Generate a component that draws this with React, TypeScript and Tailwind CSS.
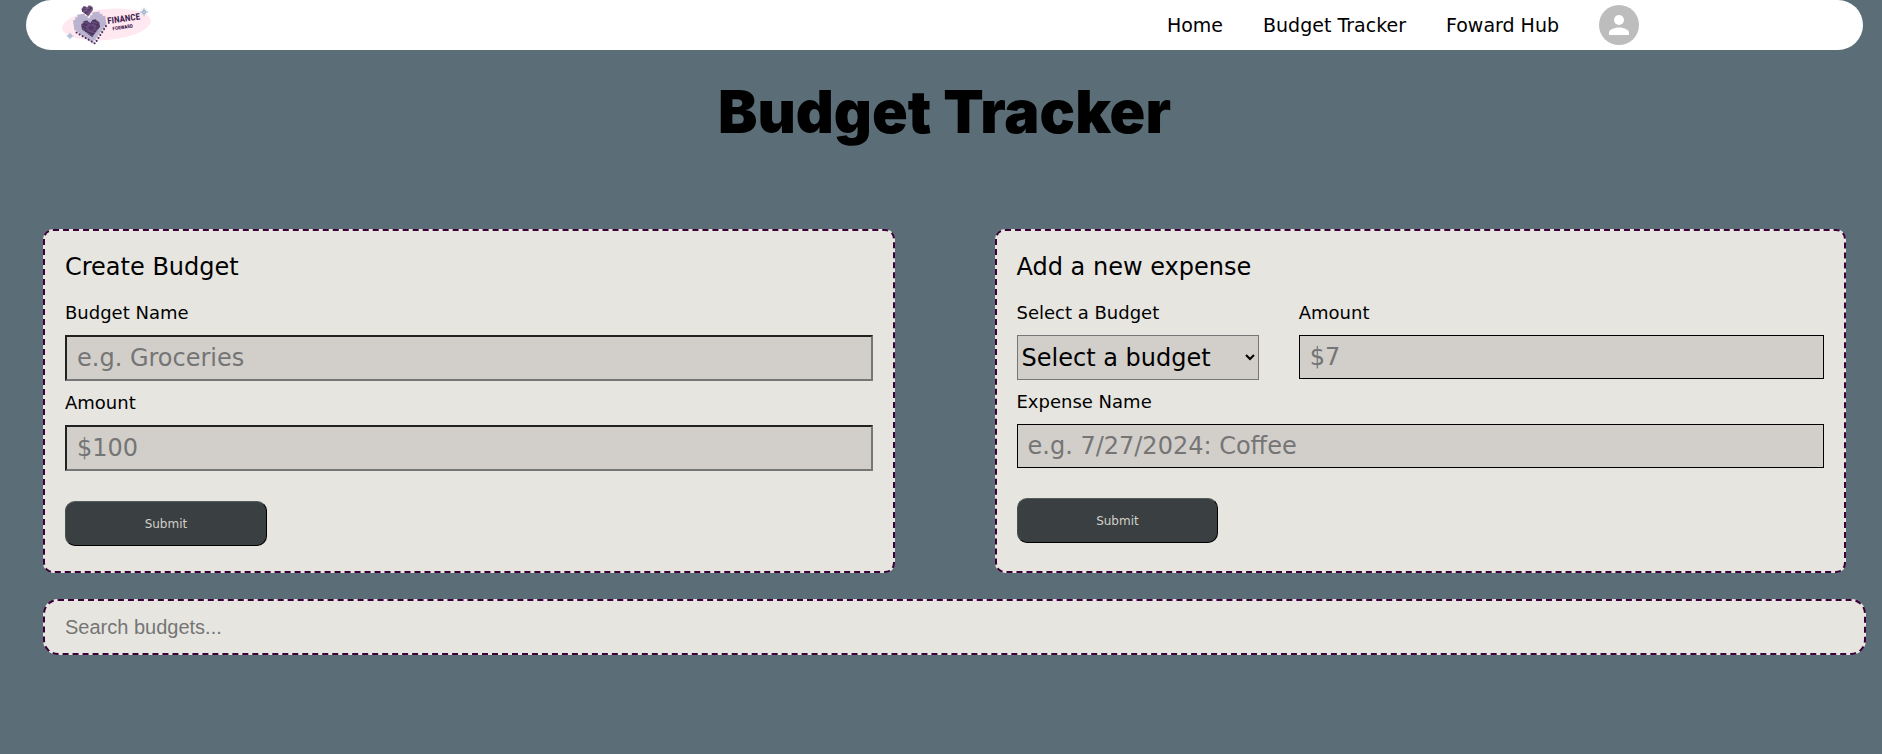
import React from 'react';

const heart = [
  '..###...###..',
  '.#####.#####.',
  '#############',
  '#############',
  '#############',
  '#############',
  '.###########.',
  '..#########..',
  '...#######...',
  '....#####....',
  '.....###.....',
  '......#......',
];

function PixelHeart({ x, y, unit, color, angle }: { x: number; y: number; unit: number; color: string; angle: number }) {
  return (
    <g transform={`translate(${x} ${y}) rotate(${angle}) scale(${unit}) translate(-6.5 -6)`} fill={color}>
      {heart.map((row, r) => {
        const first = row.indexOf('#');
        const last = row.lastIndexOf('#');
        const gap = row.slice(first, last).indexOf('.');
        if (gap < 0) return <rect key={r} x={first} y={r} width={last - first + 1} height="1.15" />;
        return (
          <React.Fragment key={r}>
            <rect x={first} y={r} width={gap} height="1.15" />
            <rect x={13 - first - gap} y={r} width={gap} height="1.15" />
          </React.Fragment>
        );
      })}
    </g>
  );
}

function Sparkle({ x, y, r }: { x: number; y: number; r: number }) {
  return (
    <g transform={`translate(${x} ${y}) scale(${r})`}>
      <path d="M0-1 .22-.22 1 0 .22 .22 0 1-.22 .22-1 0-.22-.22Z" fill="#9fb3cd" />
      <path d="M-.5-.5 .5 .5M.5-.5-.5 .5" stroke="#b9c8dc" strokeWidth=".18" />
    </g>
  );
}

function Logo() {
  return (
    <svg width="92" height="50" viewBox="0 0 92 50" role="img" aria-label="Finance Forward">
      <ellipse cx="44.500" cy="24.500" rx="44.500" ry="15.500" transform="rotate(-5 44.500 24.500)" fill="#ffe8f0" />
      <PixelHeart x={28.5} y={28} unit={2.5} color="#b9b3cf" angle={-8} />
      <PixelHeart x={29} y={28.5} unit={1.4} color="#503662" angle={-8} />
      <PixelHeart x={29.3} y={28.5} unit={0.75} color="#6a5080" angle={-8} />
      <PixelHeart x={29.3} y={28.5} unit={0.4} color="#503662" angle={-8} />
      <path d="M14.500 32.500 33 43.500 45 24.500" fill="none" stroke="#4b2e5e" strokeWidth="2" strokeLinecap="round" strokeDasharray=".1 3.400" />
      <PixelHeart x={25.5} y={11} unit={0.85} color="#4b2e5e" angle={-8} />
      <Sparkle x={8} y={36} r={4} />
      <Sparkle x={82} y={12} r={5} />
      <g transform="rotate(-8 46 25)" fill="#3f2450" fontFamily="'Liberation Sans Narrow', 'Roboto Condensed', 'Liberation Sans', sans-serif" fontWeight="bold">
        <text x="46" y="24" fontSize="9">FINANCE</text>
        <text x="50" y="31" fontSize="5">FORWARD</text>
      </g>
    </svg>
  );
}

function Avatar() {
  return (
    <svg width="40" height="40" viewBox="0 0 40 40" aria-hidden="true">
      <circle cx="20" cy="20" r="20" fill="#bdbdbd" />
      <circle cx="20" cy="15" r="5" fill="#fff" />
      <path d="M10 30v-2.500c0-3.300 6.700-5 10-5s10 1.700 10 5V30Z" fill="#fff" />
    </svg>
  );
}

const label = 'block text-[18px] leading-6';
const card = 'min-w-0 flex-1 rounded-[10px] border-2 border-dashed border-[#3b0038] bg-[#e6e5e0] px-5 pt-5 pb-[25px]';
const field = 'block w-full rounded-none bg-[#d2cfca] px-2.5 text-[24px] text-black placeholder:text-[#757575]';
const inset = 'h-[46px] border-2 border-t-[#212121] border-l-[#212121] border-r-[#767676] border-b-[#767676]';
const thin = 'h-11 border border-black';
const submit =
  'mt-[30px] block h-[45px] w-1/4 rounded-[10px] border border-t-[#565b5c] border-l-[#4a4f51] border-r-black border-b-black bg-[#3a3f41] text-[12px] text-[#d2cfca]';

export default function App() {
  return (
    <div className="min-h-screen bg-[#5b6e78] font-['DejaVu_Sans',sans-serif] text-black">
      <nav className="mr-[19px] ml-[26px] flex h-[50px] items-center justify-between rounded-full bg-white pr-[224px] pl-9">
        <a href="#home" aria-label="Finance Forward">
          <Logo />
        </a>
        <div className="flex items-center gap-10 text-[19px]">
          <a href="#home">Home</a>
          <a href="#budget">Budget Tracker</a>
          <a href="#hub">Foward Hub</a>
          <a href="#profile" aria-label="Profile">
            <Avatar />
          </a>
        </div>
      </nav>

      <main className="pr-9 pl-[43px]">
        <h1 className="pt-[27px] text-center font-[Inter,sans-serif] text-[59px] leading-[70px] font-black">Budget Tracker</h1>

        <div className="mt-[82px] flex items-stretch gap-[100px]">
          <form className={card} onSubmit={(e) => e.preventDefault()}>
            <h2 className="text-[24px] leading-8">Create Budget</h2>
            <label htmlFor="budget-name" className={`${label} mt-[18px] mb-2.5`}>Budget Name</label>
            <input id="budget-name" placeholder="e.g. Groceries" className={`${field} ${inset}`} />
            <label htmlFor="budget-amount" className={`${label} my-2.5`}>Amount</label>
            <input id="budget-amount" placeholder="$100" className={`${field} ${inset}`} />
            <button type="submit" className={submit}>Submit</button>
          </form>

          <form className={card} onSubmit={(e) => e.preventDefault()}>
            <h2 className="text-[24px] leading-8">Add a new expense</h2>
            <div className="mt-[18px] flex gap-10">
              <div className="w-[30%]">
                <label htmlFor="expense-budget" className={`${label} mb-2.5`}>Select a Budget</label>
                <select id="expense-budget" className="block h-[45px] w-full rounded-none border border-[#767676] bg-[#d2cfca] text-[24px] text-black">
                  <option>Select a budget</option>
                </select>
              </div>
              <div className="min-w-0 flex-1">
                <label htmlFor="expense-amount" className={`${label} mb-2.5`}>Amount</label>
                <input id="expense-amount" placeholder="$7" className={`${field} ${thin}`} />
              </div>
            </div>
            <label htmlFor="expense-name" className={`${label} my-2.5`}>Expense Name</label>
            <input id="expense-name" placeholder="e.g. 7/27/2024: Coffee" className={`${field} ${thin}`} />
            <button type="submit" className={submit}>Submit</button>
          </form>
        </div>

        <div className="-mr-5 mt-[26px]">
          <input
            type="search"
            aria-label="Search budgets"
            placeholder="Search budgets..."
            className="block h-14 w-full rounded-[15px] border-2 border-dashed border-[#3b0038] bg-[#e6e5e0] px-5 font-['Liberation_Sans',sans-serif] text-[20px] placeholder:text-[#757575]"
          />
        </div>
      </main>
    </div>
  );
}
